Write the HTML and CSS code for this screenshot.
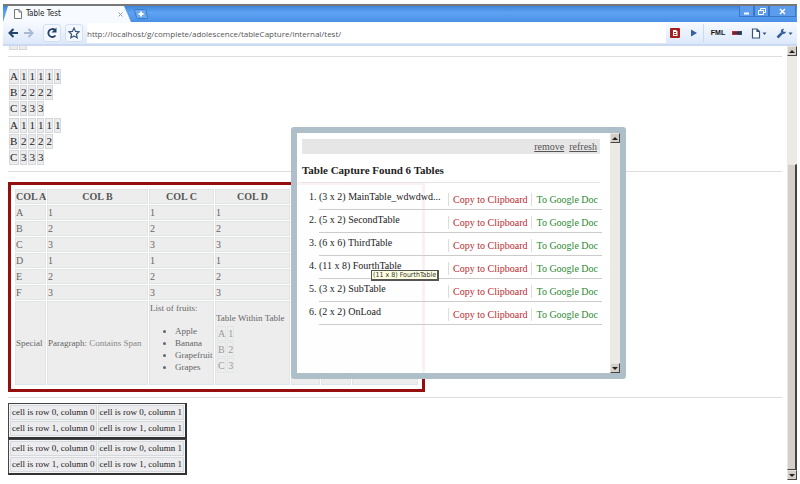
FILE: index.html
```
<!DOCTYPE html>
<html lang="en">
<head>
  <meta charset="UTF-8">
  <meta name="viewport" content="width=device-width, initial-scale=1.0">
  <title>Table Test</title>
  <link rel="stylesheet" href="styles.css">
</head>
<body>
  <div class="window">
    <header class="titlebar">
      <div class="tab">
        <svg class="tab-icon" width="8" height="10" viewBox="0 0 8 10"><path d="M.5.5h4.500l2.500 2.500v6.500h-7z M5 .5V3h2.500" fill="#fff" stroke="#777"/></svg>
        <span class="tab-title">Table Test</span>
        <button class="tab-close" aria-label="Close tab"><svg width="5" height="5" viewBox="0 0 5 5"><path d="M.5.5l4 4M4.500.5l-4 4" stroke="#999"/></svg></button>
      </div>
      <button class="new-tab" aria-label="New tab"><svg width="14" height="10" viewBox="0 0 14 10"><path d="M1 .5h9.500q1 0 1.500 1l1.500 7q0 1-1 1H4q-1 0-1.500-1L.5 1.500q0-1 .5-1z" fill="#6caaf0" stroke="#3a78c8"/><path d="M7 2.500v5M4.500 5h5" stroke="#fff" stroke-width="2"/></svg></button>
      <div class="controls">
        <button aria-label="Minimize"><svg width="13" height="9" viewBox="0 0 13 9"><path d="M4 6.500h5" stroke="#fff" stroke-width="2"/></svg></button>
        <button aria-label="Restore"><svg width="13" height="9" viewBox="0 0 13 9"><path d="M5.500 3V1.500h5v4H9M3.500 3.500h5v4h-5z" fill="none" stroke="#fff"/></svg></button>
        <button class="close" aria-label="Close"><svg width="13" height="9" viewBox="0 0 13 9"><path d="M4 2l5 5M9 2L4 7" stroke="#fff" stroke-width="1.500"/></svg></button>
      </div>
    </header>

    <nav class="toolbar">
      <button aria-label="Back"><svg width="12" height="12" viewBox="0 0 12 12"><path d="M11 6H3M6.500 2L2.500 6l4 4" fill="none" stroke="#24436b" stroke-width="2"/></svg></button>
      <button aria-label="Forward"><svg width="12" height="12" viewBox="0 0 12 12"><path d="M1 6h8M5.500 2l4 4-4 4" fill="none" stroke="#a9bbd3" stroke-width="2"/></svg></button>
      <button class="boxed" aria-label="Reload"><svg width="12" height="12" viewBox="0 0 12 12"><path d="M9.500 8.500a4 4 0 1 1-.5-5.500" fill="none" stroke="#24436b" stroke-width="1.800"/><path d="M10.500.5v5h-5z" fill="#24436b"/></svg></button>
      <button class="boxed star" aria-label="Bookmark"><svg width="12" height="12" viewBox="0 0 12 12"><path d="M6 1l1.500 3.400 3.600.4-2.700 2.400.8 3.600L6 9l-3.200 1.800.8-3.600L.9 4.800l3.600-.4z" fill="#fff" stroke="#35557f" stroke-width="1.200"/></svg></button>
      <input class="address" type="text" aria-label="Address" value="http://localhost/g/complete/adolescence/tableCapture/internal/test/">
      <button aria-label="Table Capture"><svg width="10" height="10" viewBox="0 0 10 10"><rect width="10" height="10" rx="1" fill="#a51d1d"/><path d="M3 2h3l1.500 1.500V8H3z" fill="#fff"/><path d="M4 4.500h2M4 6.500h2.500" stroke="#a51d1d"/></svg></button>
      <button class="go" aria-label="Go"><svg width="8" height="8" viewBox="0 0 8 8"><path d="M1 .5l6 3.500-6 3.500z" fill="#35609c"/></svg></button>
      <button class="ext">FML</button>
      <button aria-label="Extension"><svg width="10" height="4" viewBox="0 0 10 4"><path d="M0 0h5v4H0z" fill="#b5303a"/><path d="M5 0h5v4H5z" fill="#344a72"/><path d="M1 2h8" stroke="#222"/></svg></button>
      <button class="menu" aria-label="Page menu"><svg width="16" height="11" viewBox="0 0 16 11"><path d="M1.500 1h4.500l2.500 2.500V10h-7z M6 1v2.500h2.500" fill="#fff" stroke="#35557f" stroke-width="1.200"/><path d="M11.500 4.500h4l-2 2.500z" fill="#35557f"/></svg></button>
      <button class="menu" aria-label="Tools menu"><svg width="17" height="11" viewBox="0 0 17 11"><path d="M1.500 9.500L6 5" stroke="#35609c" stroke-width="2.500"/><path d="M8 .8Q5 .5 4.800 3.500q.5 2.700 3 2.500 2.200-.3 2.200-2.500L8 4 7 3z" fill="#35609c"/><path d="M12.500 4.500h4l-2 2.500z" fill="#35557f"/></svg></button>
    </nav>

    <div class="viewport">
      <main class="page">
        <div class="cut">
          <table class="grid"><tr><td>B</td><td>1</td></tr></table>
        </div>
        <hr>
        <div class="stack">
          <table class="grid">
            <tr><td>A</td><td>1</td><td>1</td><td>1</td><td>1</td><td>1</td></tr>
            <tr><td>B</td><td>2</td><td>2</td><td>2</td><td>2</td></tr>
            <tr><td>C</td><td>3</td><td>3</td><td>3</td></tr>
          </table>
          <table class="grid">
            <tr><td>A</td><td>1</td><td>1</td><td>1</td><td>1</td><td>1</td></tr>
            <tr><td>B</td><td>2</td><td>2</td><td>2</td><td>2</td></tr>
            <tr><td>C</td><td>3</td><td>3</td><td>3</td></tr>
          </table>
        </div>
        <hr>
        <div class="highlight">
          <table class="grid main-table">
            <colgroup><col class="col-a"><col class="col-b"><col class="col-c"><col class="col-d"><col class="col-e"><col class="col-f"><col class="col-g"></colgroup>
            <tr><th>COL A</th><th>COL B</th><th>COL C</th><th>COL D</th><th></th><th></th><th></th></tr>
            <tr><td>A</td><td>1</td><td>1</td><td>1</td><td></td><td></td><td></td></tr>
            <tr><td>B</td><td>2</td><td>2</td><td>2</td><td></td><td></td><td></td></tr>
            <tr><td>C</td><td>3</td><td>3</td><td>3</td><td></td><td></td><td></td></tr>
            <tr><td>D</td><td>1</td><td>1</td><td>1</td><td></td><td></td><td></td></tr>
            <tr><td>E</td><td>2</td><td>2</td><td>2</td><td></td><td></td><td></td></tr>
            <tr><td>F</td><td>3</td><td>3</td><td>3</td><td></td><td></td><td></td></tr>
            <tr class="special">
              <td>Special</td>
              <td>Paragraph: <span class="soft">Contains Span</span></td>
              <td>List of fruits:
                <ul class="fruits">
                  <li>Apple</li>
                  <li>Banana</li>
                  <li>Grapefruit</li>
                  <li>Grapes</li>
                </ul>
              </td>
              <td>Table Within Table
                <table class="grid sub-table">
                  <tr><td>A</td><td>1</td></tr>
                  <tr><td>B</td><td>2</td></tr>
                  <tr><td>C</td><td>3</td></tr>
                </table>
              </td>
              <td></td><td></td><td></td>
            </tr>
          </table>
        </div>
        <hr>
        <table class="grid framed">
          <tr><td>cell is row 0, column 0</td><td>cell is row 0, column 1</td></tr>
          <tr><td>cell is row 1, column 0</td><td>cell is row 1, column 1</td></tr>
        </table>
        <table class="grid framed">
          <tr><td>cell is row 0, column 0</td><td>cell is row 0, column 1</td></tr>
          <tr><td>cell is row 1, column 0</td><td>cell is row 1, column 1</td></tr>
        </table>
      </main>

      <div class="scrollbar">
        <button class="arrow up" aria-label="Scroll up"></button>
        <div class="track"><div class="thumb"></div></div>
        <button class="arrow down" aria-label="Scroll down"></button>
      </div>

      <!-- table capture overlay -->
      <aside class="panel">
        <div class="panel-body">
          <div class="panel-bar"><a href="#">remove</a><a href="#">refresh</a></div>
          <h2>Table Capture Found 6 Tables</h2>
          <ol class="found">
            <li><div class="row"><span class="name">(3 x 2) MainTable_wdwdwd...</span><a class="copy" href="#">Copy to Clipboard</a><a class="gdoc" href="#">To Google Doc</a></div></li>
            <li><div class="row"><span class="name">(5 x 2) SecondTable</span><a class="copy" href="#">Copy to Clipboard</a><a class="gdoc" href="#">To Google Doc</a></div></li>
            <li><div class="row"><span class="name">(6 x 6) ThirdTable</span><a class="copy" href="#">Copy to Clipboard</a><a class="gdoc" href="#">To Google Doc</a></div></li>
            <li><div class="row"><span class="name">(11 x 8) FourthTable</span><a class="copy" href="#">Copy to Clipboard</a><a class="gdoc" href="#">To Google Doc</a><span class="tooltip">(11 x 8) FourthTable</span></div></li>
            <li><div class="row"><span class="name">(3 x 2) SubTable</span><a class="copy" href="#">Copy to Clipboard</a><a class="gdoc" href="#">To Google Doc</a></div></li>
            <li><div class="row"><span class="name">(2 x 2) OnLoad</span><a class="copy" href="#">Copy to Clipboard</a><a class="gdoc" href="#">To Google Doc</a></div></li>
          </ol>
        </div>
        <div class="scrollbar">
          <button class="arrow up" aria-label="Scroll up"></button>
          <div class="track"></div>
          <button class="arrow down" aria-label="Scroll down"></button>
        </div>
      </aside>
    </div>
  </div>
</body>
</html>
```
FILE: styles.css
```
* {
  box-sizing: border-box;
}

body {
  margin: 0;
  background: #fff;
  font: 11px/13px "Liberation Serif", serif;
  color: #222;
}

button {
  display: flex;
  align-items: center;
  justify-content: center;
  padding: 0;
  border: 0;
  background: none;
  cursor: pointer;
}

.window {
  display: flex;
  flex-direction: column;
  min-height: 100vh;
  padding: 4px 3px;
}

/* browser chrome */
.titlebar {
  display: flex;
  height: 18px;
  border-top: 2px solid #777;
  background: linear-gradient(#3f86dc, #5ea3f2 40%, #4a90e6);
}

.tab {
  display: flex;
  align-items: center;
  gap: 4px;
  width: 128px;
  padding: 0 8px 0 11px;
  background: #f7faff;
  clip-path: polygon(5px 0, 121px 0, 100% 100%, 0 100%);
}

.tab-title {
  flex: 1;
  font: 8px/12px "DejaVu Sans Condensed", "DejaVu Sans", sans-serif;
}

.new-tab {
  width: 20px;
}

.controls {
  display: flex;
  align-items: flex-start;
  margin-left: auto;
  padding-right: 1px;
}

.controls button {
  width: 15px;
  height: 11px;
  border: 1px solid #3a76c8;
  border-top: 0;
  background: #5b9cec;
}

.controls .close {
  width: 27px;
}

.toolbar {
  display: flex;
  align-items: center;
  gap: 4px;
  height: 24px;
  padding: 0 4px;
  border-bottom: 2px solid #cbdaf0;
  background: linear-gradient(#f7faff, #dce8fa);
}

.toolbar button {
  height: 18px;
}

.toolbar .boxed {
  width: 18px;
  margin-left: 4px;
  border: 1px solid #d3e0f3;
  border-radius: 3px;
  background: #f4f8fe;
}

.toolbar .star {
  margin-left: 0;
}

.address {
  flex: 1;
  min-width: 0;
  height: 20px;
  padding: 0;
  border: 0;
  background: #fff;
  color: #555;
  font: 8px/18px "Open Sans", sans-serif;
}

.toolbar .go {
  width: 20px;
  border-right: 1px solid #cbdaf0;
}

.toolbar .ext {
  width: 20px;
  color: #111;
  font: bold 7px/10px "Liberation Sans", sans-serif;
}

.toolbar .menu {
  margin-left: 5px;
}

/* page */
.viewport {
  position: relative;
  display: flex;
  flex: 1;
}

.page {
  flex: 1;
  padding: 0 5px 4px;
}

.page hr {
  margin: 5px 0 0;
  border: 0;
  border-top: 1px solid #ddd;
}

.cut {
  display: flex;
  align-items: flex-end;
  height: 5px;
  overflow: hidden;
}

.stack {
  padding: 11px 0 0;
}

.grid {
  border-spacing: 1px;
}

.grid td,
.grid th {
  padding: 0;
  border: 1px solid #d5d9db;
  background: #ececee;
}

.highlight {
  width: 417px;
  margin-top: 10px;
  padding: 3px;
  border: 3px solid #960f0f;
}

.main-table {
  width: 100%;
  table-layout: fixed;
  color: #666;
  font-size: 10px;
}

.main-table td,
.main-table th {
  height: 15px;
  border-color: #e2e5e6;
  background: #ededed;
  white-space: nowrap;
}

.main-table .col-a { width: 31px; }
.main-table .col-b { width: 101px; }
.main-table .col-c { width: 65px; }
.main-table .col-d { width: 75px; }
.main-table .col-e { width: 29px; }
.main-table .col-f { width: 30px; }

.main-table th {
  color: #555;
}

.special {
  font-size: 9px;
}

.soft {
  color: #888;
}

.fruits {
  margin: 10px 0 11px;
  padding-left: 25px;
  line-height: 12px;
}

.sub-table {
  color: #999;
  font-size: 10px;
}

.framed {
  border: 1px solid #444;
  border-right: 2px solid #333;
  border-bottom: 2px solid #333;
  background: #f4f5f6;
  font-size: 9px;
}

.framed td {
  padding: 0 1px;
}

hr + .framed {
  margin-top: 5px;
}

/* scrollbars */
.scrollbar {
  display: flex;
  flex-direction: column;
  width: 10px;
}

.arrow {
  height: 10px;
  border: 1px solid #e8e6e0;
  border-right-color: #444;
  border-bottom-color: #444;
  background: #d4d0c8;
}

.arrow::before {
  content: "";
  border: 3px solid transparent;
}

.arrow.up::before {
  border-top: 0;
  border-bottom-color: #222;
}

.arrow.down::before {
  border-bottom: 0;
  border-top-color: #222;
}

.track {
  display: flex;
  flex: 1;
  flex-direction: column;
  justify-content: flex-end;
  background: #eceae5;
}

.thumb {
  height: 74%;
  border: 1px solid #e8e6e0;
  border-right: 2px solid #444;
  border-bottom: 1px solid #444;
  background: #d4d0c8;
}

/* overlay */
.panel {
  position: absolute;
  top: 81px;
  left: 288px;
  display: flex;
  width: 335px;
  height: 252px;
  border: 6px solid #afbfc9;
  border-radius: 3px;
  background: rgba(255, 255, 255, 0.95);
  font-size: 10px;
}

.panel-body {
  flex: 1;
  min-width: 0;
  padding: 6px 8px 0 5px;
}

.panel-bar {
  display: flex;
  justify-content: flex-end;
  gap: 5px;
  margin-right: 2px;
  padding: 1px 3px;
  background: #e6e6e6;
}

.panel-bar a {
  color: #555;
}

.panel h2 {
  margin: 10px 2px 0 0;
  padding-bottom: 5px;
  border-bottom: 1px solid #e4e4e4;
  font-size: 11px;
  line-height: 13px;
}

.found {
  margin: 4px 0 0;
  padding-left: 17px;
}

.row {
  position: relative;
  display: flex;
  align-items: flex-start;
  height: 23px;
  padding-top: 3px;
  border-bottom: 1px solid #ccc;
}

.name {
  flex: 1;
  white-space: nowrap;
}

.row a {
  margin-top: 3px;
  padding: 0 4px;
  border-left: 1px solid #ddd;
  text-decoration: none;
  white-space: nowrap;
}

.row .copy {
  color: #c01f2e;
}

.row .gdoc {
  color: #2c8a34;
}

.tooltip {
  position: absolute;
  top: 14px;
  left: 52px;
  z-index: 1;
  padding: 0 1px;
  border: 1px solid #555;
  border-right-width: 2px;
  border-bottom-width: 2px;
  background: #ffffe1;
  color: #333;
  font: 7px/8px "DejaVu Sans Condensed", "DejaVu Sans", sans-serif;
  white-space: nowrap;
}
```
